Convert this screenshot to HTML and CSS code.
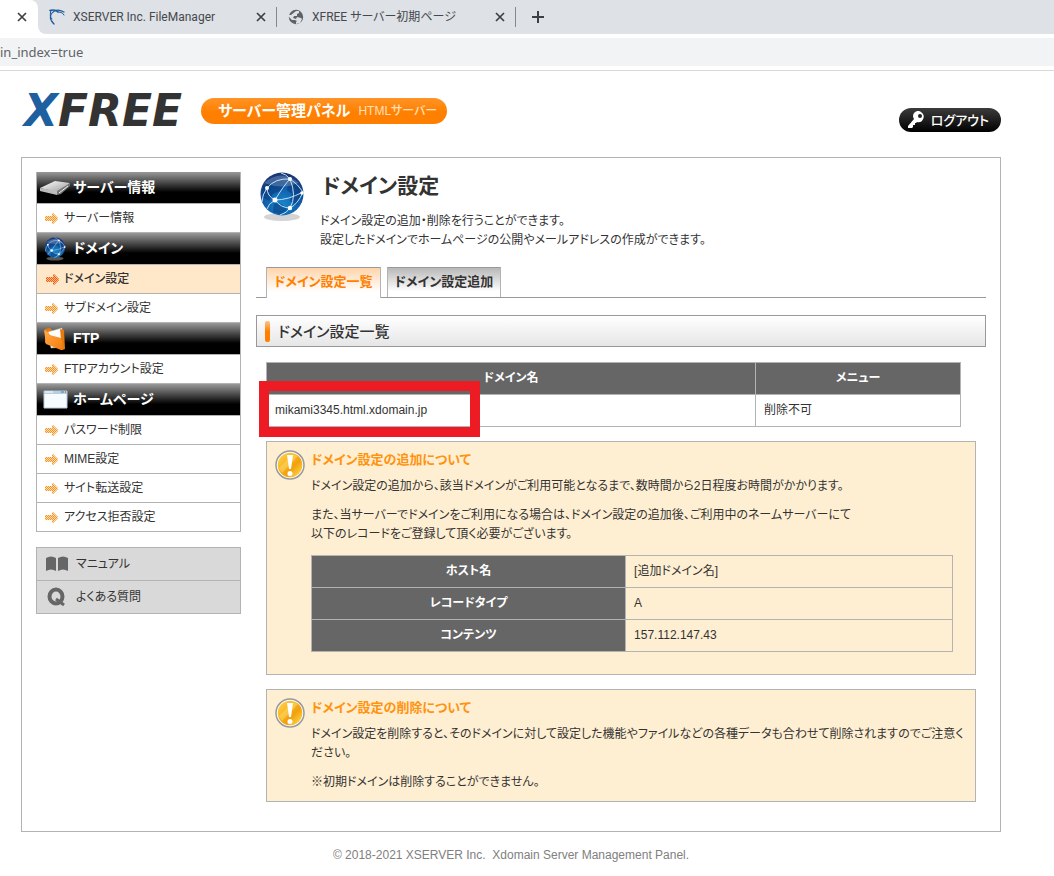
FILE: index.html
```html
<!DOCTYPE html>
<html lang="ja">
<head>
<meta charset="utf-8">
<title>ドメイン設定</title>
<link rel="stylesheet" href="styles.css">
</head>
<body>
<svg class="defs" aria-hidden="true">
  <defs>
    <pattern id="dots" width="2" height="2" patternUnits="userSpaceOnUse"><path d="M0 0h1v1H0zM1 1h1v1H1z" fill="#f7931e"/></pattern>
    <pattern id="dots-on" width="2" height="2" patternUnits="userSpaceOnUse"><path d="M0 0h1v1H0zM1 1h1v1H1z" fill="#f15a24"/></pattern>
    <radialGradient id="sea" cx=".5" cy=".75" r=".75"><stop offset="0" stop-color="#1688cf"/><stop offset=".55" stop-color="#125da8"/><stop offset="1" stop-color="#19316f"/></radialGradient>
    <linearGradient id="gold" x1="0" y1="0" x2="1" y2="1"><stop offset="0" stop-color="#ffd75a"/><stop offset=".4" stop-color="#f9b51c"/><stop offset=".6" stop-color="#f2a00d"/><stop offset="1" stop-color="#ffe251"/></linearGradient>
    <linearGradient id="orange" x1="0" y1="0" x2="1" y2="1"><stop offset="0" stop-color="#ffab4a"/><stop offset="1" stop-color="#f47b0b"/></linearGradient>
    <linearGradient id="metal" x1="0" y1="0" x2="1" y2="1"><stop offset="0" stop-color="#fff"/><stop offset="1" stop-color="#999"/></linearGradient>
  </defs>
  <symbol id="arrow" viewBox="0 0 13 11"><path d="M0 3h7V0h1l5 5v1l-5 5H7V8H0z" fill="#f7931e" opacity=".3"/><path d="M0 3h7V0h1l5 5v1l-5 5H7V8H0z" fill="url(#dots)"/></symbol>
  <symbol id="arrow-on" viewBox="0 0 13 11"><path d="M0 3h7V0h1l5 5v1l-5 5H7V8H0z" fill="#f7931e" opacity=".5"/><path d="M0 3h7V0h1l5 5v1l-5 5H7V8H0z" fill="url(#dots-on)"/></symbol>
  <symbol id="close" viewBox="0 0 10 10"><path d="M1 1l8 8M9 1L1 9" stroke="#3c4043" stroke-width="1.700" fill="none"/></symbol>
  <symbol id="globe" viewBox="0 0 46 50">
    <ellipse cx="23" cy="45" rx="18" ry="4" fill="#aaa" opacity=".5"/>
    <circle cx="23" cy="22" r="21.500" fill="url(#sea)"/>
    <path d="M4 15l11-8 13 4-7 8-7 3-4 7-7-4zM29 12l9-1 5 11-5 11-7-4 2-7-5-4zM15 31l8 1 5 5-5 6-9-3z" fill="#0a3979" opacity=".55"/>
    <path d="M5 11Q22-4 40 11Q23 18 5 11z" fill="#fff" opacity=".2"/>
    <g fill="none" stroke="#bfe0f7" stroke-width="1"><path d="M8 16Q16 6 31 7Q39 12 44 20M8 16Q8 24 16 28Q22 36 31 36Q39 32 44 20M16 28Q25 13 31 7M16 28Q29 28 44 20M8 16Q3 23 3 30M31 7Q38 24 31 36Q28 41 21 43M16 28Q9 32 8 37M31 7Q27 2 22 1"/></g>
    <g fill="#fff"><circle cx="8" cy="16" r="2"/><circle cx="31" cy="7" r="2"/><circle cx="16" cy="28" r="2.500"/><circle cx="31" cy="36" r="2.200"/><circle cx="43" cy="21" r="1.800"/></g>
  </symbol>
  <symbol id="alert" viewBox="0 0 30 30"><circle cx="15" cy="15" r="14" fill="#fff" stroke="#999" stroke-width="1.500"/><circle cx="15" cy="15" r="12.300" fill="url(#gold)"/><path d="M4 18L18 4l5 2L7 23z" fill="#ffe486" opacity=".4"/><path d="M12 5h6l-2 14h-2z" fill="#fff"/><circle cx="15" cy="23.500" r="2.500" fill="#fff"/></symbol>
</svg>

<div class="browser">
  <div class="tabstrip">
    <div class="tab tab-current"><button class="tab-close" aria-label="閉じる"><svg width="10" height="10"><use href="#close"/></svg></button></div>
    <div class="tab tab-wide">
      <svg class="favicon" width="16" height="16" viewBox="0 0 16 16"><g fill="none" stroke="#1c5d9e" stroke-linecap="round"><path d="M5 15Q-1 9 3 4Q7-1 15 3" stroke-width="1.200"/><path d="M1 1.500Q6 0 9 3" stroke-width="1.500"/><path d="M2 1Q0 8 3 10" stroke-width="1"/><path d="M9 3Q14 3 15 6" stroke-width="1"/></g></svg>
      <a class="tab-title" href="#">XSERVER Inc. FileManager</a>
      <button class="tab-close" aria-label="閉じる"><svg width="10" height="10"><use href="#close"/></svg></button>
    </div>
    <div class="tab tab-wide tab-ruled">
      <svg class="favicon" width="16" height="16" viewBox="0 0 16 16"><circle cx="8" cy="8" r="7.200" fill="#5f6368"/><path d="M8 2l3 0 0 2-2 1 0 2-3 0-1 2 3 1 1-2 4 1 1 1-2 4-4 1 0-2 1-1-2-1-3 0-3-3 0-2 2 0z" fill="#dee1e6"/></svg>
      <a class="tab-title" href="#">XFREE サーバー初期ページ</a>
      <button class="tab-close" aria-label="閉じる"><svg width="10" height="10"><use href="#close"/></svg></button>
    </div>
    <button class="tab-new" aria-label="新しいタブ"><svg width="12" height="12" viewBox="0 0 12 12"><path d="M6 0v12M0 6h12" stroke="#3c4043" stroke-width="2"/></svg></button>
  </div>
  <div class="toolbar"><input class="address" type="text" aria-label="アドレス" value="in_index=true"></div>
</div>

<div class="page">
  <header class="header">
    <a class="logo" href="#"><span class="logo-x">X</span>FREE</a>
    <p class="badge"><strong>サーバー管理パネル</strong><span class="badge-sub">HTMLサーバー</span></p>
    <button class="logout"><svg width="18" height="18" viewBox="0 0 18 18"><path d="M7 2a5.500 5.500 0 1 1 3 9l-1 1-1 0 0 2-2 0 0 2-1 1-4 0 0-2 6-7a5.500 5.500 0 0 1 0-6z" fill="#fff"/><circle cx="13" cy="5" r="2" fill="#222"/></svg>ログアウト</button>
  </header>

  <div class="frame">
    <aside class="sidebar">
      <nav class="menu">
        <h2 class="menu-head"><svg width="32" height="24" viewBox="0 0 32 24"><path d="M1 12L16 5l15 2-9 8-4 1z" fill="url(#metal)"/><path d="M1 12l17 3v4L1 15z" fill="#bbb"/><path d="M18 15L31 7v3l-9 8-4 1z" fill="#777"/><path d="M20 17l9-7" stroke="#eee"/></svg>サーバー情報</h2>
        <a class="menu-item" href="#"><svg width="13" height="11"><use href="#arrow"/></svg>サーバー情報</a>
        <h2 class="menu-head"><svg width="32" height="24"><use href="#globe"/></svg>ドメイン</h2>
        <a class="menu-item menu-item-on" href="#"><svg width="13" height="11"><use href="#arrow-on"/></svg>ドメイン設定</a>
        <a class="menu-item" href="#"><svg width="13" height="11"><use href="#arrow"/></svg>サブドメイン設定</a>
        <h2 class="menu-head"><svg width="32" height="24" viewBox="0 0 32 24"><path d="M6 2l5-1 3 3 8-1v19L6 16z" fill="#e8790c"/><path d="M9 5l14-4 1 19-12 1z" fill="#fff" stroke="#bbb" stroke-width=".5"/><path d="M21 2l4 1 1 19-3 1z" fill="#e8790c"/><path d="M5 3l4 2 2 3 11 3 2 12-2 0-15-6z" fill="url(#orange)"/></svg>FTP</h2>
        <a class="menu-item" href="#"><svg width="13" height="11"><use href="#arrow"/></svg>FTPアカウント設定</a>
        <h2 class="menu-head"><svg width="32" height="24" viewBox="0 0 32 24"><path d="M5 3h23v17H5z" fill="#f5fbff" stroke="#b9cddc"/><path d="M5 3h23v3H5z" fill="#b5cfe0"/><path d="M6 4h8" stroke="#fff"/><path d="M22 4h3" stroke="#567b9b"/><path d="M26 4h1" stroke="#c22"/></svg>ホームページ</h2>
        <a class="menu-item" href="#"><svg width="13" height="11"><use href="#arrow"/></svg>パスワード制限</a>
        <a class="menu-item" href="#"><svg width="13" height="11"><use href="#arrow"/></svg>MIME設定</a>
        <a class="menu-item" href="#"><svg width="13" height="11"><use href="#arrow"/></svg>サイト転送設定</a>
        <a class="menu-item" href="#"><svg width="13" height="11"><use href="#arrow"/></svg>アクセス拒否設定</a>
      </nav>
      <nav class="help">
        <a class="help-item" href="#"><svg width="24" height="20" viewBox="0 0 24 20"><path d="M1 4Q6 1 11 4v13Q6 14 1 17zM13 4Q18 1 23 4v13Q18 14 13 17z" fill="#666"/></svg>マニュアル</a>
        <a class="help-item" href="#"><svg width="24" height="20" viewBox="0 0 24 20"><ellipse cx="11" cy="9.500" rx="6.500" ry="7" fill="none" stroke="#666" stroke-width="4"/><path d="M11 12l8 6" stroke="#666" stroke-width="3"/></svg>よくある質問</a>
      </nav>
    </aside>

    <main class="content">
      <div class="intro">
        <svg width="46" height="50"><use href="#globe"/></svg>
        <div class="intro-text">
          <h1 class="title">ドメイン設定</h1>
          <p class="lead">ドメイン設定の追加・削除を行うことができます。<br>設定したドメインでホームページの公開やメールアドレスの作成ができます。</p>
        </div>
      </div>
      <nav class="tabs">
        <a class="tabs-item tabs-item-on" href="#">ドメイン設定一覧</a>
        <a class="tabs-item" href="#">ドメイン設定追加</a>
      </nav>
      <h2 class="section">ドメイン設定一覧</h2>

      <div class="blocks">
        <div class="list">
          <table class="grid">
            <colgroup><col class="col-name"><col></colgroup>
            <thead><tr><th>ドメイン名</th><th>メニュー</th></tr></thead>
            <tbody><tr><td>mikami3345.html.xdomain.jp</td><td>削除不可</td></tr></tbody>
          </table>
          <div class="marker"></div>
        </div>

        <section class="notice notice-add">
          <svg class="notice-icon" width="30" height="30"><use href="#alert"/></svg>
          <div class="notice-body">
            <h3 class="notice-title">ドメイン設定の追加について</h3>
            <p>ドメイン設定の追加から、該当ドメインがご利用可能となるまで、数時間から2日程度お時間がかかります。</p>
            <p>また、当サーバーでドメインをご利用になる場合は、ドメイン設定の追加後、ご利用中のネームサーバーにて<br>以下のレコードをご登録して頂く必要がございます。</p>
            <table class="grid records">
              <colgroup><col class="col-host"><col></colgroup>
              <tbody>
                <tr><th>ホスト名</th><td>[追加ドメイン名]</td></tr>
                <tr><th>レコードタイプ</th><td>A</td></tr>
                <tr><th>コンテンツ</th><td>157.112.147.43</td></tr>
              </tbody>
            </table>
          </div>
        </section>

        <section class="notice">
          <svg class="notice-icon" width="30" height="30"><use href="#alert"/></svg>
          <div class="notice-body">
            <h3 class="notice-title">ドメイン設定の削除について</h3>
            <p>ドメイン設定を削除すると、そのドメインに対して設定した機能やファイルなどの各種データも合わせて削除されますのでご注意ください。</p>
            <p>※初期ドメインは削除することができません。</p>
          </div>
        </section>
      </div>
    </main>
  </div>
  <footer class="footer">© 2018-2021 XSERVER Inc.&nbsp; Xdomain Server Management Panel.</footer>
</div>
</body>
</html>
```

FILE: styles.css
```css
* { box-sizing: border-box; }

body {
  margin: 0;
  background: #fff;
  color: #333;
  font: 12px/19px "Liberation Sans", "Noto Sans CJK JP", sans-serif;
  font-feature-settings: "palt";
}

h1, h2, h3, p { margin: 0; }
a { color: inherit; text-decoration: none; }
button { border: 0; padding: 0; background: none; font: inherit; color: inherit; cursor: pointer; }
svg { display: block; flex: none; }
.defs { position: absolute; width: 0; height: 0; }

/* Browser window */
.browser { font-family: "Noto Sans", "Noto Sans CJK JP", sans-serif; border-bottom: 1px solid #d9d9d9; }
.tabstrip { display: flex; height: 34px; background: #dee1e6; }
.tab { display: flex; align-items: center; }
.tab-current { width: 38px; padding-left: 17px; background: #fff; border-top-right-radius: 8px; }
.tab-wide { width: 238px; padding: 0 10px 0 11px; gap: 8px; }
.tab-wide:nth-child(2) { background: #dee1e6; border-bottom-left-radius: 8px; box-shadow: -8px 8px 0 #fff; clip-path: inset(0); }
.tab-ruled { width: 240px; padding: 0 11px 0 12px; background: linear-gradient(#888, #888) left center / 1px 20px no-repeat, linear-gradient(#888, #888) right center / 1px 20px no-repeat; }
.tab-title { flex: 1; color: #45494d; font-family: Roboto, "Noto Sans CJK JP", sans-serif; white-space: nowrap; overflow: hidden; }
.tab-new { display: flex; align-items: center; padding: 0 16px; }
.toolbar { padding: 4px 0; background: #fff; }
.address {
  display: block;
  width: 100%;
  height: 28px;
  padding: 0;
  border: 0;
  background: #f1f3f4;
  color: #5f6368;
  font: 13px "Noto Sans", sans-serif;
}

/* Page */
.page { margin: 0 53px 0 21px; }
.header { display: flex; align-items: center; height: 86px; padding: 0 0 7px 3px; }
.logo { font: italic bold 44px/48px "DejaVu Sans", sans-serif; color: #333; }
.logo-x { color: #1d5f9f; }
.badge {
  display: flex;
  align-items: center;
  gap: 8px;
  height: 26px;
  margin-left: 19px;
  padding: 0 10px 0 17px;
  border-radius: 13px;
  background: linear-gradient(#ff9326, #ff8000 55%);
  color: #fff;
  font-size: 15px;
  line-height: 24px;
  white-space: nowrap;
}
.badge-sub { color: #ffe0bd; font-size: 12px; font-weight: 500; }
.logout {
  display: flex;
  align-items: center;
  gap: 6px;
  height: 24px;
  margin: 19px 0 0 auto;
  padding: 0 12px 0 8px;
  border-radius: 12px;
  background: linear-gradient(#3c3c3c, #000);
  color: #fff;
  font-size: 13px;
  font-weight: 500;
}

.frame { display: flex; gap: 15px; align-items: flex-start; padding: 14px 14px 29px; border: 1px solid #b3b3b3; }
.sidebar { flex: none; width: 205px; }
.menu { border: 1px solid #b3b3b3; border-top: 0; }
.menu-head {
  display: flex;
  align-items: center;
  gap: 2px;
  height: 32px;
  padding-left: 2px;
  border-bottom: 1px solid #b3b3b3;
  background: linear-gradient(#999, #000 65%);
  color: #fff;
  font-size: 14px;
}
.menu-item { display: flex; align-items: center; gap: 6px; height: 29px; padding-left: 8px; border-bottom: 1px solid #b3b3b3; }
.menu-item:last-child { height: 28px; border-bottom: 0; }
.menu-item-on { padding-left: 9px; gap: 5px; background: #ffe8ca; font-weight: 500; }
.help { margin-top: 15px; border: 1px solid #b3b3b3; background: #d9d9d9; }
.help-item { display: flex; align-items: center; gap: 7px; height: 32px; padding-left: 8px; }
.help-item + .help-item { height: 33px; border-top: 1px solid #b3b3b3; }

.content { flex: 1; min-width: 0; }
.intro { display: flex; gap: 15px; padding-left: 3px; }
.title { padding-left: 2px; font-size: 21px; line-height: 28px; }
.lead { margin-top: 12px; }
.tabs { display: flex; gap: 6px; margin-top: 17px; padding-left: 10px; border-bottom: 1px solid #999; }
.tabs-item {
  height: 30px;
  padding: 0 7px;
  border: 1px solid #b3b3b3;
  border-top-color: #999;
  border-bottom: 0;
  background: linear-gradient(#b8b8b8, #fff 80%);
  font-size: 13px;
  font-weight: 700;
  line-height: 28px;
  white-space: nowrap;
}
.tabs-item-on { height: 31px; margin-bottom: -1px; background: linear-gradient(#ffd5aa, #fff 80%); color: #ff8000; }
.section {
  display: flex;
  align-items: center;
  gap: 8px;
  height: 32px;
  margin-top: 17px;
  padding-left: 8px;
  border: 1px solid #999;
  background: linear-gradient(#fff, #e6e6e6);
  font-size: 15px;
  font-weight: 500;
}
.section::before { content: ""; width: 5px; height: 21px; border-radius: 2px; background: linear-gradient(#ffc28a, #ff8000 50%); }

.blocks { display: flex; flex-direction: column; padding: 15px 10px 0; }
.list { position: relative; padding-right: 15px; }
.marker { position: absolute; left: -7px; top: 19px; width: 221px; height: 56px; border: 10px solid #ed1c24; }
.grid { width: 100%; border-collapse: collapse; table-layout: fixed; }
.grid th, .grid td { height: 32px; padding: 0 8px; border: 1px solid #b3b3b3; text-align: left; }
.grid th { background: #666; color: #fff; text-align: center; }
.col-name { width: 489px; }
.col-host { width: 49%; }

.notice { display: flex; gap: 6px; margin-top: 14px; padding: 8px 8px 9px; border: 1px solid #b3b3b3; background: #ffefd2; }
.notice-add { padding-bottom: 22px; }
.notice-body { flex: 1; min-width: 0; }
.notice-body p { margin: 8px 0 10px; }
.notice-body p + p { margin-bottom: 0; }
.notice-title { color: #ff930f; font-size: 13px; }
.records { width: calc(100% - 14px); margin-top: 11px; }

.footer { padding: 14px 0 10px; color: #808080; text-align: center; }
```
